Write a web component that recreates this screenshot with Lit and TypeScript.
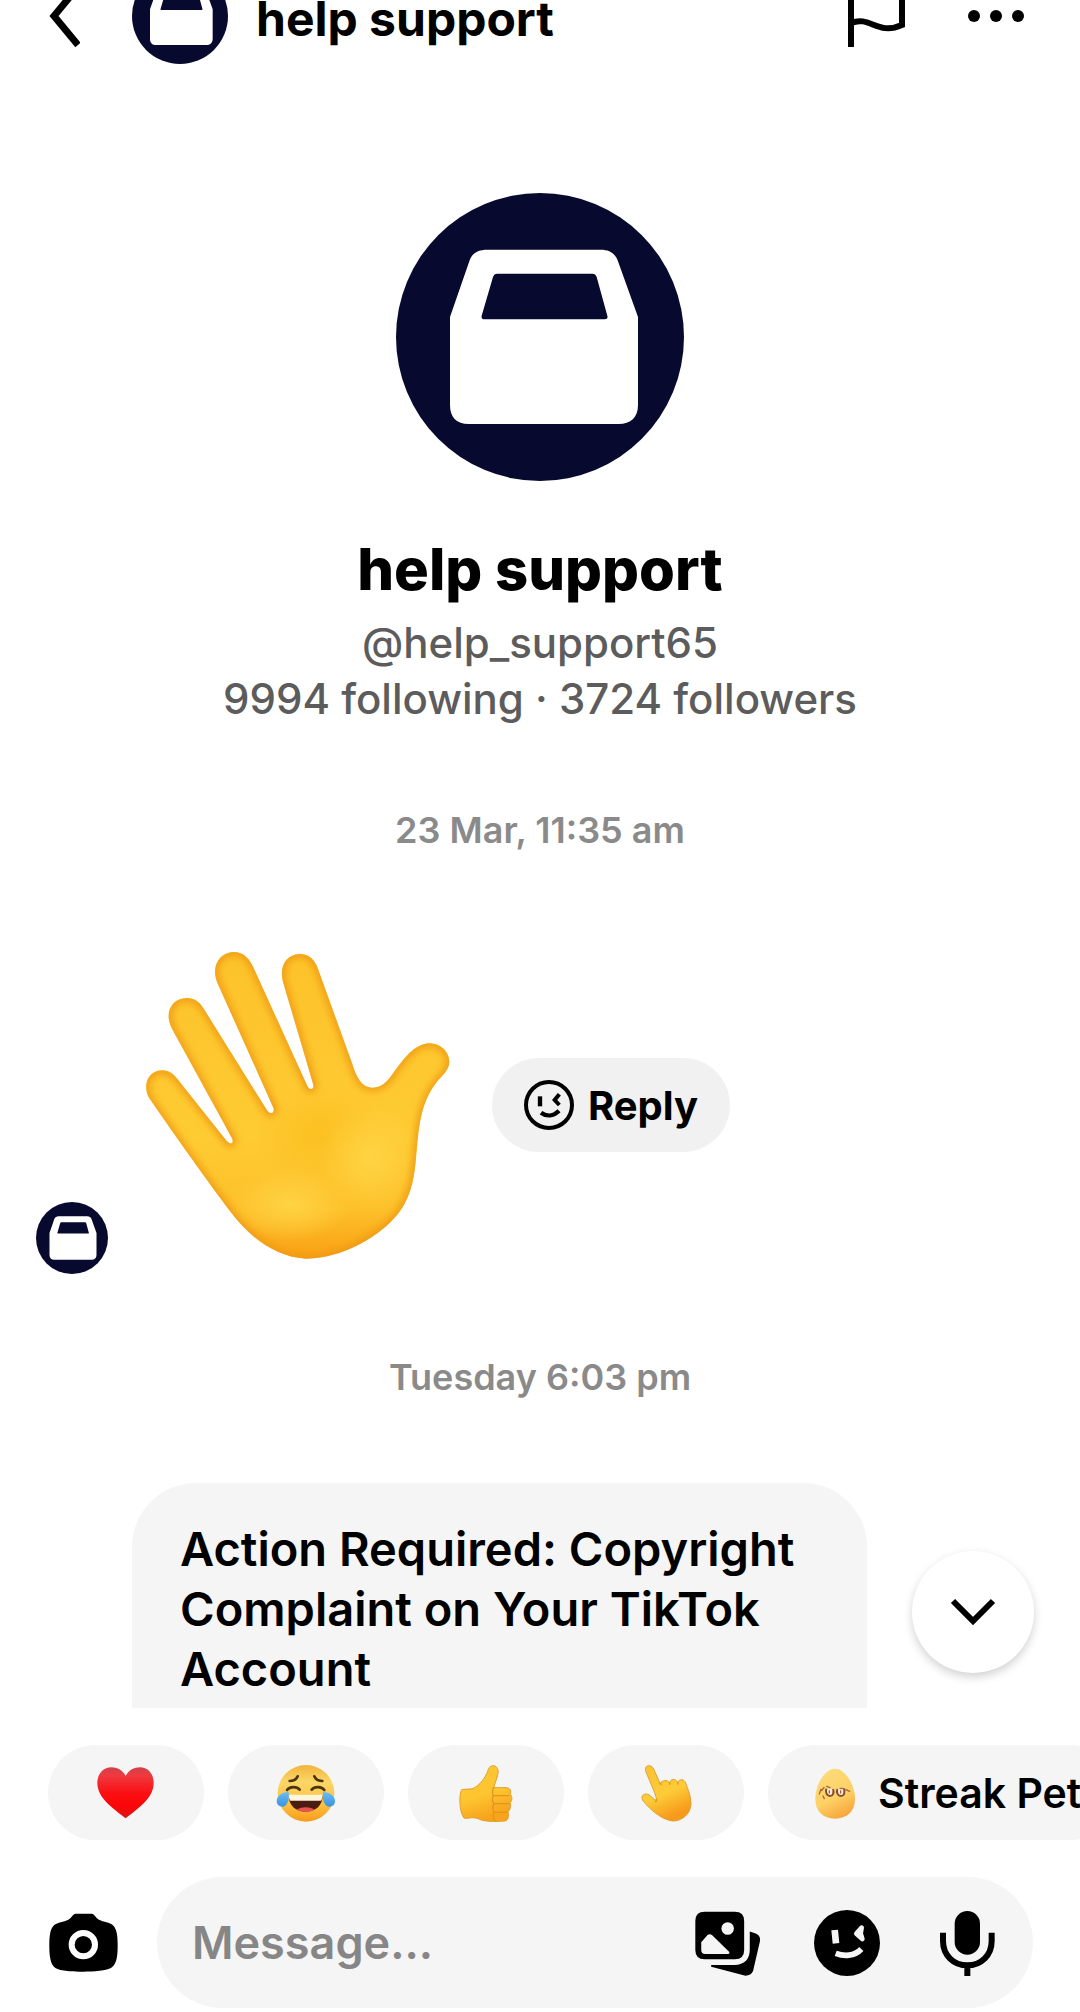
import { LitElement, css, html, svg } from 'lit';
import { customElement, property } from 'lit/decorators.js';

const heart = svg`
  <defs>
    <linearGradient id="heart" x1="0" y1="0" x2="0" y2="1">
      <stop offset="0" stop-color="#d0414c" />
      <stop offset="0.15" stop-color="#ee3a40" />
      <stop offset="0.5" stop-color="#fb1014" />
      <stop offset="0.75" stop-color="#fb0606" />
      <stop offset="1" stop-color="#dc1616" />
    </linearGradient>
  </defs>
  <path fill="url(#heart)" d="M287 136C297 118 312 110 330 110C354 110 371 130 371 156C371 204 322 234 287 263C252 234 202 204 202 156C202 130 220 110 244 110C262 110 277 118 287 136Z" />
`;

const joy = svg`
  <defs>
    <linearGradient id="joy" x1="0" y1="0" x2="0" y2="1">
      <stop offset="0" stop-color="#f2b53c" />
      <stop offset="0.3" stop-color="#fbd667" />
      <stop offset="0.7" stop-color="#fcc140" />
      <stop offset="1" stop-color="#f79a1c" />
    </linearGradient>
    <linearGradient id="tear" x1="0" y1="0" x2="0" y2="1">
      <stop offset="0" stop-color="#6bbcf4" />
      <stop offset="1" stop-color="#3a93e4" />
    </linearGradient>
  </defs>
  <circle cx="828" cy="188" r="85" fill="url(#joy)" />
  <g fill="none" stroke="#4a3413" stroke-width="8" stroke-linecap="round">
    <path d="M779 151C791 151 799 146 803 137" />
    <path d="M877 151C865 151 857 146 853 137" />
    <path d="M771 178C779 167 800 166 809 177" />
    <path d="M845 177C854 166 875 167 883 178" />
  </g>
  <path fill="#4b1c10" d="M776 194H878C878 224 858 243 827 243C796 243 776 224 776 194Z" />
  <path fill="#fff6dc" d="M776 192H878C878 199 876 205 873 210H781C778 205 776 199 776 192Z" />
  <path fill="#e8544f" d="M801 237C808 227 846 227 853 237C838 246 816 246 801 237Z" />
  <path fill="url(#tear)" d="M776 184C756 184 740 197 740 211C740 222 748 228 757 228C771 228 779 210 776 184Z" />
  <path fill="url(#tear)" d="M879 184C899 184 915 197 915 211C915 222 907 228 898 228C884 228 876 210 879 184Z" />
`;

const thumb = svg`
  <defs>
    <linearGradient id="thumb" x1="0" y1="0" x2="0.3" y2="1">
      <stop offset="0" stop-color="#fbc634" />
      <stop offset="0.6" stop-color="#fdc530" />
      <stop offset="1" stop-color="#f8a31c" />
    </linearGradient>
  </defs>
  <path fill="url(#thumb)" stroke="#e0a030" stroke-width="3" stroke-linejoin="round" d="M215 177C228 174 241 177 250 173C269 164 286 141 293 122C296 109 303 104 311 105C322 107 326 117 324 128C321 144 315 157 311 171H350C361 172 365 182 360 190C368 198 367 210 360 216C364 225 361 238 354 243C358 255 355 270 344 271C321 273 300 273 282 270C270 268 262 261 249 261C239 261 230 265 222 262C208 246 206 190 215 177Z" />
  <path fill="none" stroke="#e2951f" stroke-width="4" stroke-linecap="round" d="M311 171C306 178 307 190 310 195H356M312 219H358M312 245H352M310 195C305 206 307 214 312 219C307 229 308 238 312 245C309 255 309 262 314 269" />
`;

const point = svg`
  <defs>
    <linearGradient id="point" x1="0" y1="0" x2="0.4" y2="1">
      <stop offset="0" stop-color="#fbc232" />
      <stop offset="0.6" stop-color="#fdcb38" />
      <stop offset="1" stop-color="#f79a1a" />
    </linearGradient>
  </defs>
  <path fill="url(#point)" stroke="#e0a030" stroke-width="3" stroke-linejoin="round" d="M768 124C763 112 769 104 778 105C787 106 791 113 794 122L810 158C817 149 832 146 839 156C843 143 856 143 863 155C868 143 883 145 887 157C893 174 903 196 903 219C903 250 874 272 848 271C818 267 790 244 773 226C763 216 754 206 756 198C760 187 776 188 784 198C790 205 795 208 800 208C798 194 790 177 768 124Z" />
  <path fill="none" stroke="#e2951f" stroke-width="4" stroke-linecap="round" d="M810 158L813 162M839 156V161M863 155V160M800 207L797 213" />
`;

const egg = svg`
  <defs>
    <linearGradient id="egg" x1="0.2" y1="0" x2="0.6" y2="1">
      <stop offset="0" stop-color="#fbdc7c" />
      <stop offset="0.6" stop-color="#fdd166" />
      <stop offset="1" stop-color="#f8a63c" />
    </linearGradient>
  </defs>
  <path fill="url(#egg)" d="M255 114C286 114 315 163 315 205C315 243 290 264 255 264C220 264 196 243 196 205C196 163 224 114 255 114Z" />
  <g fill="#fbeede" stroke="#8a4a2c" stroke-width="6">
    <path d="M229 174C225 186 231 196 240 196C249 196 253 186 249 175" />
    <path d="M262 175C258 186 264 196 273 196C282 196 286 186 282 174" />
  </g>
  <path fill="none" stroke="#a8663a" stroke-width="4" stroke-linecap="round" d="M213 176L208 190M222 170L215 180M230 167L240 171M270 173L282 174M288 177L299 182M219 196L223 204M238 180V187M272 180V187" />
`;

const wave = svg`
  <defs>
    <linearGradient id="skin" x1="0" y1="0" x2="0" y2="1">
      <stop offset="0" stop-color="#fdc22a" />
      <stop offset="0.6" stop-color="#fecb33" />
      <stop offset="0.84" stop-color="#fdc02a" />
      <stop offset="1" stop-color="#f9a014" />
    </linearGradient>
    <radialGradient id="glow">
      <stop offset="0" stop-color="#ffd343" />
      <stop offset="1" stop-color="#ffd343" stop-opacity="0" />
    </radialGradient>
    <radialGradient id="shade">
      <stop offset="0" stop-color="#fcc021" />
      <stop offset="1" stop-color="#fcc021" stop-opacity="0" />
    </radialGradient>
    <filter id="soft" x="-10%" y="-10%" width="120%" height="120%">
      <feGaussianBlur stdDeviation="11" />
    </filter>
    <path id="hand" d="M386 498C368 462 383 420 424 417C448 416 463 430 477 449L620 629C632 642 643 636 636 621L456 292C431 244 455 201 500 200C528 200 542 216 556 240L741 537C751 552 766 546 760 529L594 159C570 106 598 64 640 62C672 62 688 82 700 108L862 464C868 478 883 476 880 460L789 152C777 104 798 70 838 68C868 68 884 86 893 110L997 398C1009 437 1024 468 1056 469C1086 470 1104 448 1122 422C1151 382 1184 338 1227 336C1264 336 1290 364 1288 396C1284 424 1259 437 1241 465C1196 532 1196 606 1188 680C1181 760 1167 818 1112 872C1040 941 940 982 857 982C760 976 684 911 632 842C568 758 470 620 386 498Z" />
    <clipPath id="handclip"><use href="#hand" /></clipPath>
  </defs>
  <use href="#hand" fill="url(#skin)" />
  <g clip-path="url(#handclip)">
    <ellipse cx="900" cy="610" rx="200" ry="150" fill="url(#shade)" />
    <ellipse cx="1050" cy="680" rx="150" ry="160" fill="url(#glow)" />
    <ellipse cx="810" cy="820" rx="180" ry="110" fill="url(#glow)" />
    <use href="#hand" fill="none" stroke="#ee9a14" stroke-width="20" filter="url(#soft)" />
  </g>
`;

const reactions = [
  { name: 'Heart', box: '198 97 180 180', art: heart },
  { name: 'Tears of joy', box: '738 97 180 180', art: joy },
  { name: 'Thumbs up', box: '198 97 180 180', art: thumb },
  { name: 'Nudge', box: '738 97 180 180', art: point },
];

@customElement('brand-avatar')
export class BrandAvatar extends LitElement {
  static styles = css`
    :host {
      display: block;
      flex: none;
    }
    svg {
      display: block;
      width: 100%;
    }
  `;

  render() {
    return html`
      <svg viewBox="108 68 864 864" aria-hidden="true">
        <circle cx="540" cy="500" r="432" fill="#070a2e" />
        <path fill="#fff" fill-rule="evenodd" d="M382 238H722C750 238 767 250 775 276L834 440V704C834 742 812 761 776 761H326C290 761 270 742 270 704V440L329 270C337 248 354 238 382 238ZM412 310Q402 310 399 320L365 436Q363 447 374 447H734Q745 447 742 436L710 320Q707 310 697 310Z" />
      </svg>
    `;
  }
}

@customElement('time-stamp')
export class TimeStamp extends LitElement {
  @property() label = '';

  static styles = css`
    :host {
      display: block;
      padding: 83px 0 86px;
      text-align: center;
      font-size: 36px;
      line-height: 40px;
      font-weight: 600;
      color: #8a8a8a;
    }
  `;

  render() {
    return html`<time>${this.label}</time>`;
  }
}

@customElement('app-root')
export class AppRoot extends LitElement {
  static styles = css`
    :host {
      display: flex;
      flex-direction: column;
      height: 100vh;
      overflow: hidden;
      background: #fff;
      color: #000;
      font-family: Inter, 'Noto Sans', sans-serif;
      font-weight: 600;
    }
    * {
      box-sizing: border-box;
    }
    h1, h2, p {
      margin: 0;
    }
    svg {
      display: block;
      flex: none;
    }
    button {
      display: flex;
      align-items: center;
      justify-content: center;
      flex: none;
      margin: 0;
      padding: 0;
      border: 0;
      background: none;
      color: inherit;
      font: inherit;
      cursor: pointer;
    }

    header {
      display: flex;
      align-items: center;
      flex: none;
      height: 96px;
      margin-top: -32px;
      padding: 0 55px 0 48px;
    }
    .small-avatar {
      width: 96px;
      margin: 0 28px 0 52px;
    }
    header h1 {
      flex: 1;
      padding-top: 6px;
      font-size: 48px;
      line-height: 56px;
      font-weight: 700;
    }
    .actions {
      display: flex;
      align-items: center;
      gap: 60px;
    }

    .thread {
      position: relative;
      flex: 1;
      min-height: 0;
      overflow: hidden;
    }
    .profile {
      display: flex;
      flex-direction: column;
      align-items: center;
      padding-top: 129px;
      font-size: 42px;
      line-height: 56px;
      font-weight: 500;
      color: #5c5c5c;
      text-align: center;
    }
    .big-avatar {
      width: 288px;
    }
    .profile h2 {
      margin: 54px 0 12px;
      font-size: 58px;
      line-height: 68px;
      font-weight: 800;
      color: #000;
    }
    .message {
      display: flex;
      align-items: flex-end;
      gap: 24px;
      padding: 0 36px;
    }
    .msg-avatar {
      width: 72px;
    }
    .sticker {
      display: flex;
      align-items: center;
      gap: 24px;
      height: 338px;
    }
    .sticker > svg {
      margin: 0 18px 0 14px;
    }
    .reply {
      gap: 14px;
      height: 94px;
      padding: 0 32px;
      border-radius: 47px;
      background: #f1f1f1;
      font-size: 40px;
      font-weight: 700;
    }
    .bubble {
      max-width: 735px;
      padding: 36px 48px 84px;
      border-radius: 64px;
      background: #f5f5f5;
      font-size: 47px;
      line-height: 60px;
    }
    .jump {
      position: absolute;
      right: 46px;
      bottom: 35px;
      width: 122px;
      height: 122px;
      border-radius: 50%;
      background: #fff;
      box-shadow: 0 4px 10px rgba(0, 0, 0, 0.18);
    }

    .quick {
      display: flex;
      flex: none;
      gap: 24px;
      padding: 37px 0 37px 48px;
      overflow: hidden;
    }
    .chip {
      width: 156px;
      height: 95px;
      border-radius: 48px;
      background: #f5f5f5;
      font-size: 41px;
      white-space: nowrap;
    }
    .chip.wide {
      width: auto;
      gap: 13px;
      padding: 0 37px;
    }

    form {
      display: flex;
      align-items: center;
      flex: none;
      gap: 39px;
      padding: 0 47px 4px 49px;
    }
    .field {
      display: flex;
      align-items: center;
      flex: 1;
      gap: 54px;
      height: 131px;
      min-width: 0;
      padding: 0 33px 0 35px;
      border-radius: 66px;
      background: #f5f5f5;
    }
    input {
      flex: 1;
      min-width: 0;
      height: 100%;
      padding: 0;
      border: 0;
      outline: 0;
      background: none;
      color: #000;
      font: inherit;
      font-size: 45px;
    }
    input::placeholder {
      color: #868686;
      opacity: 1;
    }
  `;

  renderHeader() {
    return html`
      <header>
        <button aria-label="Back">
          <svg width="32" height="64" viewBox="0 0 32 64" fill="none" stroke="#000" stroke-width="7">
            <path d="M30 3L6 32L30 61" />
          </svg>
        </button>
        <brand-avatar class="small-avatar"></brand-avatar>
        <h1>help support</h1>
        <div class="actions">
          <button aria-label="Report">
            <svg width="60" height="64" viewBox="0 0 60 64" fill="none" stroke="#000" stroke-width="6">
              <path d="M4 0V63M4 39C23 31 30 52 55 41V5C30 14 23 -4 4 5" />
            </svg>
          </button>
          <button aria-label="More">
            <svg width="58" height="14" viewBox="0 0 58 14">
              <circle cx="7" cy="7" r="6" />
              <circle cx="29" cy="7" r="6" />
              <circle cx="51" cy="7" r="6" />
            </svg>
          </button>
        </div>
      </header>
    `;
  }

  renderThread() {
    return html`
      <main class="thread">
        <section class="profile">
          <brand-avatar class="big-avatar"></brand-avatar>
          <h2>help support</h2>
          <p>@help_support65</p>
          <p>9994 following · 3724 followers</p>
        </section>
        <time-stamp label="23 Mar, 11:35 am"></time-stamp>
        <div class="message">
          <brand-avatar class="msg-avatar"></brand-avatar>
          <div class="sticker">
            <svg width="304" height="307" viewBox="378 62 912 921" role="img" aria-label="Waving hand">${wave}</svg>
            <button class="reply">
              <svg width="50" height="50" viewBox="132 122 150 150" fill="none" stroke="#000">
                <circle cx="207" cy="197" r="69" stroke-width="12" />
                <path stroke-width="13" d="M180 171V201" />
                <path stroke-width="12" d="M238 165L224 182L238 197" />
                <path stroke-width="13" d="M183 220C199 232 220 231 237 214" />
              </svg>
              Reply
            </button>
          </div>
        </div>
        <time-stamp label="Tuesday 6:03 pm"></time-stamp>
        <div class="message">
          <div class="msg-avatar"></div>
          <p class="bubble">Action Required: Copyright Complaint on Your TikTok Account</p>
        </div>
        <button class="jump" aria-label="Jump to latest">
          <svg width="46" height="30" viewBox="0 0 46 30" fill="none" stroke="#000" stroke-width="6">
            <path d="M3 4L23 24L43 4" />
          </svg>
        </button>
      </main>
    `;
  }

  renderComposer() {
    return html`
      <form @submit=${(e: Event) => e.preventDefault()}>
        <button type="button" aria-label="Camera">
          <svg width="69" height="60" viewBox="58 154 207 180">
            <path d="M138 156H186C194 157 199 169 208 174C222 181 240 181 250 191C263 204 264 229 264 250C264 276 263 305 247 317C233 328 190 330 161 330C132 330 92 329 77 319C61 307 59 279 59 252C59 228 60 203 73 191C84 181 102 181 116 174C125 169 130 157 138 156Z" />
            <circle cx="161" cy="249" r="35" fill="none" stroke="#fff" stroke-width="18" />
          </svg>
        </button>
        <div class="field">
          <input type="text" placeholder="Message..." aria-label="Message" />
          <button type="button" aria-label="Photos">
            <svg width="66" height="66" viewBox="99 149 198 200">
              <path d="M130 154H222Q250 154 250 182V270Q250 298 222 298H130Q102 298 102 270V182Q102 154 130 154Z" />
              <path d="M267 214L285 220Q300 226 298 243L277 334Q271 348 254 348L150 321V316H220Q267 314 267 268Z" />
              <circle cx="200" cy="205" r="19" fill="#f5f5f5" />
              <path fill="#f5f5f5" d="M120 247L139 225Q146 219 154 226L205 276Q207 282 201 282H132Q120 282 120 270Z" />
            </svg>
          </button>
          <button type="button" aria-label="Stickers">
            <svg width="66" height="66" viewBox="459 149 198 198">
              <circle cx="558" cy="248" r="99" />
              <g fill="none" stroke="#f5f5f5" stroke-linejoin="round">
                <path stroke-width="20" d="M521 209L525 249" />
                <path stroke-width="14" fill="#f5f5f5" d="M602 202L586 220L604 236L599 219Z" />
                <path stroke-width="17" d="M524 279C548 288 580 289 601 266" />
              </g>
            </svg>
          </button>
          <button type="button" aria-label="Voice message">
            <svg width="66" height="66" viewBox="819 149 198 198">
              <rect x="881" y="152" width="76" height="131" rx="38" />
              <path fill="none" stroke="#000" stroke-width="18" d="M846 217V242C846 285 878 315 919 315C960 315 992 285 992 242V217M919 315V347" />
            </svg>
          </button>
        </div>
      </form>
    `;
  }

  render() {
    return html`
      ${this.renderHeader()}
      ${this.renderThread()}
      <div class="quick">
        ${reactions.map((r) => html`
          <button class="chip" aria-label=${r.name}>
            <svg width="60" height="60" viewBox=${r.box}>${r.art}</svg>
          </button>
        `)}
        <button class="chip wide">
          <svg width="60" height="60" viewBox="165 97 180 180">${egg}</svg>
          Streak Pet
        </button>
      </div>
      ${this.renderComposer()}
    `;
  }
}
